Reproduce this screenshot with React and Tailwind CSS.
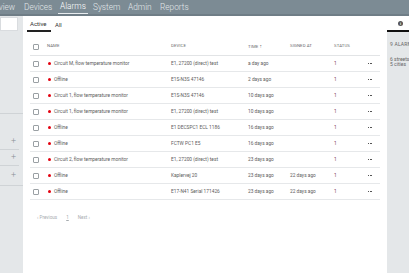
import React from "react";

const rows = [
  ["Circuit M, flow temperature monitor", "E1, 27200 (direct) test", "a day ago", ""],
  ["Offline", "E1S-N3S 47146", "2 days ago", ""],
  ["Circuit 1, flow temperature monitor", "E1S-N3S 47146", "10 days ago", ""],
  ["Circuit 1, flow temperature monitor", "E1, 27200 (direct) test", "10 days ago", ""],
  ["Offline", "E1 DECSPC1 ECL 1186", "16 days ago", ""],
  ["Offline", "FCTW PC1 E5", "16 days ago", ""],
  ["Circuit 2, flow temperature monitor", "E1, 27200 (direct) test", "23 days ago", ""],
  ["Offline", "Kaplervej 20", "23 days ago", "22 days ago"],
  ["Offline", "E17-N41 Serial 171426", "23 days ago", "22 days ago"],
];

const grid = "grid grid-cols-[16px_125px_77px_42px_44px_34px_12px] items-center";

function Checkbox() {
  return <div className="w-[6px] h-[6px] ml-[3px] border border-[#9aa0a4] bg-white rounded-[1px]" />;
}

export default function App() {
  return (
    <div
      className="w-[409px] h-[273px] overflow-hidden flex flex-col bg-white text-[#555]"
      style={{ fontFamily: "Roboto, 'Noto Sans', sans-serif" }}
    >
      {/* top nav */}
      <div className="h-[16px] shrink-0 bg-[#7c8b94] border-b-[2px] border-[#6f7d86] flex items-end overflow-hidden">
        <div className="flex items-end text-[8.3px] leading-[13px] text-[#e2e7ea] font-light whitespace-nowrap">
          <span className="w-[35px] ml-[-18px] shrink-0">Overview</span>
          <span className="w-[29px] ml-[7px] shrink-0">Devices</span>
          <span className="w-[30px] ml-[5px] pl-[2px] shrink-0 border-b border-[#e8ecef] text-white">Alarms</span>
          <span className="w-[30px] ml-[5px] shrink-0">System</span>
          <span className="w-[27px] ml-[5px] shrink-0">Admin</span>
          <span className="w-[30px] ml-[5px] shrink-0">Reports</span>
        </div>
      </div>

      <div className="flex flex-1 min-h-0">
        {/* left sidebar */}
        <div className="w-[23px] shrink-0 bg-[#e4e7e9] flex flex-col">
          <div className="h-[14px] w-[18px] mt-[1px] bg-white border border-[#d9dcdf]" />
          <div className="h-[82px]" />
          <div className="h-px bg-[#cfd3d6]" />
          <div className="h-[20px]" />
          <div className="flex flex-col text-[#8a9196]">
            <div className="h-[15px] flex items-center justify-end pr-[7px] text-[9px] leading-none font-light">+</div>
            <div className="h-px bg-[#cfd3d6] w-[19px]" />
            <div className="h-[15px] flex items-center justify-end pr-[7px] text-[9px] leading-none font-light">+</div>
            <div className="h-px bg-[#cfd3d6] w-[19px]" />
            <div className="h-[19px] flex items-center justify-end pr-[7px] text-[9px] leading-none font-light">+</div>
            <div className="h-px bg-[#cfd3d6]" />
          </div>
        </div>

        {/* main */}
        <div className="flex-1 flex flex-col min-w-0">
          <div className="h-[16px] flex items-end pl-[4px] gap-[3px] text-[6px] text-[#333]">
            <div className="px-[3px] h-[15px] flex items-center border-b-[2px] border-[#222] w-[24px]">Active</div>
            <div className="px-[1px] h-[15px] flex items-center">All</div>
          </div>
          <div className="pl-[7px] pt-[6px]">
            <div className="w-[350px]">
              <div className={`${grid} h-[18px] border-b border-[#e2e4e6] text-[4.3px] text-[#6a6a6a] tracking-[0.1px]`}>
                <Checkbox />
                <div className="pl-[1px]">NAME</div>
                <div>DEVICE</div>
                <div>TIME <span className="text-[5px]">↑</span></div>
                <div>SIGNED AT</div>
                <div>STATUS</div>
                <div />
              </div>
              {rows.map((r, i) => (
                <div key={i} className={`${grid} h-[16px] border-b border-[#e6e8ea] text-[4.8px] text-[#5c5c5c]`}>
                  <Checkbox />
                  <div className="flex items-center gap-[3px] pl-[2px] whitespace-nowrap">
                    <span className="w-[3px] h-[3px] rounded-full bg-[#e3000f] shrink-0" />
                    <span>{r[0]}</span>
                  </div>
                  <div className="whitespace-nowrap">{r[1]}</div>
                  <div className="whitespace-nowrap">{r[2]}</div>
                  <div className="whitespace-nowrap">{r[3]}</div>
                  <div className="text-[#7a3a55]">1</div>
                  <div className="flex items-center gap-[0.5px]">
                    <span className="w-[1px] h-[1px] bg-[#555]" />
                    <span className="w-[1px] h-[1px] bg-[#555]" />
                    <span className="w-[1px] h-[1px] bg-[#555]" />
                  </div>
                </div>
              ))}
              <div className="flex items-center h-[36px] pl-[7px] text-[4.6px] text-[#a7acb0] gap-[9px]">
                <span>‹ Previous</span>
                <span className="underline">1</span>
                <span>Next ›</span>
              </div>
            </div>
          </div>
        </div>

        {/* right panel */}
        <div className="w-[22px] shrink-0 flex flex-col overflow-hidden">
          <div className="h-[16px] flex items-center pl-[11px] border-b-[2px] border-[#111] bg-white">
            <div className="w-[5px] h-[5px] rounded-full bg-[#555] text-white text-[4px] leading-[5px] text-center font-bold">i</div>
          </div>
          <div className="flex-1 bg-[#e4e7e9] pl-[3px] pt-[9px] text-[5px] text-[#666] whitespace-nowrap">
            <div className="tracking-[0.2px]">9 ALARMS</div>
            <div className="mt-[8px] leading-[5px]">6 streets</div>
            <div className="leading-[5px]">5 cities</div>
          </div>
        </div>
      </div>
    </div>
  );
}
